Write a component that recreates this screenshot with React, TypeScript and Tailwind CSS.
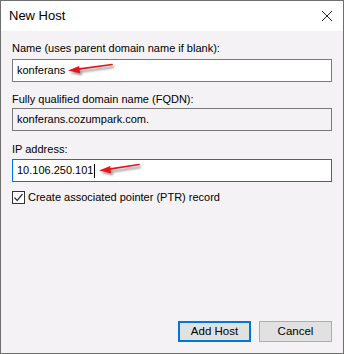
import React from "react";

function RedArrow({ className, width = 50 }: { className?: string; width?: number }) {
  const t = width - 3;
  return (
    <svg className={className} width={width + 4} height="16" viewBox={`0 0 ${width + 4} 16`}>
      <defs>
        <filter id="sh" x="-20%" y="-60%" width="140%" height="220%">
          <feGaussianBlur stdDeviation="1.3" />
        </filter>
      </defs>
      <g transform="translate(2,2.5)" opacity="0.4" filter="url(#sh)">
        <path d={`M${t} 2.5 L12 7`} stroke="#000" strokeWidth="2" fill="none" />
        <path d="M1 8.5 L12 3.8 L13 11 Z" fill="#000" />
      </g>
      <path d={`M${t} 2.5 L11 7.2`} stroke="#e8141a" strokeWidth="1.7" fill="none" strokeLinecap="round" />
      <path d="M1 8.6 L12.2 4 L13 11.2 Z" fill="#e8141a" />
    </svg>
  );
}

export default function App() {
  return (
    <div
      className="w-[344px] h-[354px] border border-[#6f6f6f] bg-[#f5f2f5] flex flex-col text-[11px] text-black"
      style={{ fontFamily: '"Liberation Sans", Arial, sans-serif' }}
    >
      {/* Title bar */}
      <div className="h-[30px] bg-white flex items-center justify-between pl-[8px] pr-[10px]">
        <span className="text-[13px]">New Host</span>
        <svg width="12" height="12" viewBox="0 0 12 12">
          <path d="M1 1 L11 11 M11 1 L1 11" stroke="#222" strokeWidth="1" />
        </svg>
      </div>

      <div className="flex-1 flex flex-col px-[11px] pt-[10px] pb-[11px]">
        <label className="leading-[15px]">Name (uses parent domain name if blank):</label>
        <div className="mt-[3px] h-[23px] bg-white border border-[#7a7a7a] flex items-center pl-[4px]">
          <span>konferans</span>
          <RedArrow className="ml-[2px] -mt-[2px]" width={48} />
        </div>

        <label className="mt-[10px] leading-[15px]">Fully qualified domain name (FQDN):</label>
        <div className="mt-[1px] h-[23px] border border-[#7a7a7a] flex items-center pl-[4px]">
          <span>konferans.cozumpark.com.</span>
        </div>

        <label className="mt-[11px] leading-[15px]">IP address:</label>
        <div className="mt-[2px] h-[23px] bg-white border border-[#0078d7] flex items-center pl-[4px]">
          <span>10.106.250.101</span>
          <span className="w-px h-[14px] bg-black ml-px" />
          <RedArrow className="ml-[3px] -mt-[2px]" width={44} />
        </div>

        <div className="mt-[8px] flex items-center gap-[3px] h-[15px]">
          <span className="w-[13px] h-[13px] border border-[#333] bg-white flex items-center justify-center">
            <svg width="11" height="11" viewBox="0 0 11 11">
              <path d="M1.5 5.5 L4.2 8.5 L9.5 2" stroke="#333" strokeWidth="1.2" fill="none" />
            </svg>
          </span>
          <span>Create associated pointer (PTR) record</span>
        </div>

        <div className="mt-auto flex justify-end gap-[8px]">
          <button className="w-[73px] h-[21px] bg-[#e1e1e1] border-2 border-[#0078d7] text-[11.5px] leading-none">
            Add Host
          </button>
          <button className="w-[73px] h-[21px] bg-[#e1e1e1] border border-[#adadad] text-[11.5px] leading-none">
            Cancel
          </button>
        </div>
      </div>
    </div>
  );
}
